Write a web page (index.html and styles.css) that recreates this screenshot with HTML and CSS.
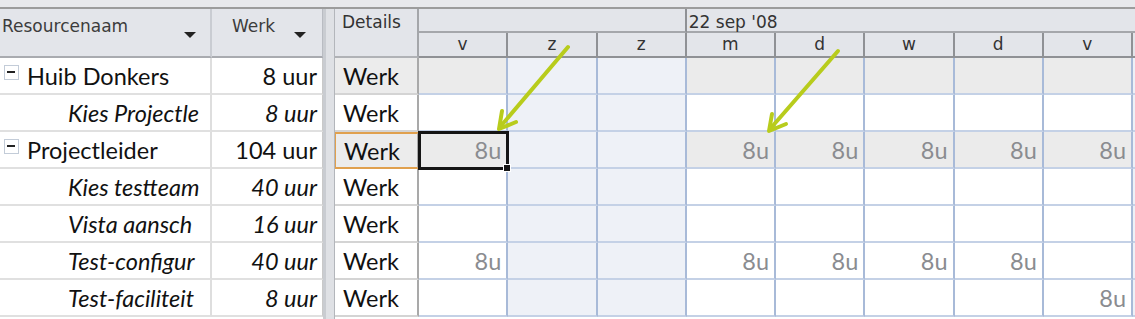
FILE: index.html
```html
<!DOCTYPE html>
<html lang="nl">
<head>
  <meta charset="UTF-8" />
  <title>Resourcegebruik</title>
  <link rel="stylesheet" href="styles.css">
</head>
<body>
  <div class="topstrip"></div>
  <div class="view">
    <div class="sheet">
      <div class="hd">Resourcenaam<span class="drop"></span></div>
      <div class="hd hd-werk">Werk<span class="drop"></span></div>

      <div class="cell name group"><span class="minus"></span>Huib Donkers</div>
      <div class="cell num">8 uur</div>
      <div class="cell name task">Kies Projectle</div>
      <div class="cell num task">8 uur</div>
      <div class="cell name group"><span class="minus"></span>Projectleider</div>
      <div class="cell num">104 uur</div>
      <div class="cell name task">Kies testteam</div>
      <div class="cell num task">40 uur</div>
      <div class="cell name task">Vista aansch</div>
      <div class="cell num task">16 uur</div>
      <div class="cell name task">Test-configur</div>
      <div class="cell num task">40 uur</div>
      <div class="cell name task">Test-faciliteit</div>
      <div class="cell num task">8 uur</div>
    </div>

    <div class="splitter"></div>

    <div class="timeline">
      <div class="th details-hd">Details</div>
      <div class="th week first"></div>
      <div class="th week">22 sep '08</div>
      <div class="th day">v</div>
      <div class="th day">z</div>
      <div class="th day">z</div>
      <div class="th day">m</div>
      <div class="th day">d</div>
      <div class="th day">w</div>
      <div class="th day">d</div>
      <div class="th day">v</div>
      <div class="th day"></div>
    </div>
  </div>

  <svg class="arrows" width="1135" height="319" viewBox="0 0 1135 319">
    <g fill="none" stroke="#b8cc1c" stroke-width="4" stroke-linecap="round" stroke-linejoin="round">
      <line x1="568" y1="47" x2="500" y2="127" />
      <polyline points="502,111 499,129 516,122" />
      <line x1="838" y1="51" x2="770" y2="129" />
      <polyline points="772,114 769,131 786,124" />
    </g>
  </svg>

  <script>
    // timephased rows: one entry per resource / assignment
    const rows = [
      { kind: 'sum', cells: ['', '', '', '', '', '', '', '', ''] },
      { kind: '',    cells: ['', '', '', '', '', '', '', '', ''] },
      { kind: 'sum sel-row', cells: ['8u', '', '', '8u', '8u', '8u', '8u', '8u', ''] },
      { kind: '',    cells: ['', '', '', '', '', '', '', '', ''] },
      { kind: '',    cells: ['', '', '', '', '', '', '', '', ''] },
      { kind: '',    cells: ['8u', '', '', '8u', '8u', '8u', '8u', '', ''] },
      { kind: '',    cells: ['', '', '', '', '', '', '', '8u', ''] }
    ];
    const weekend = [1, 2, 8];
    const grid = document.querySelector('.timeline');

    rows.forEach((row, r) => {
      const d = document.createElement('div');
      d.className = 'det ' + row.kind;
      d.textContent = 'Werk';
      grid.appendChild(d);
      row.cells.forEach((val, c) => {
        const td = document.createElement('div');
        td.className = 'tp ' + row.kind;
        if (weekend.includes(c)) td.classList.add('wknd');
        if (r === 2 && c === 0) td.classList.add('selected');
        td.textContent = val;
        grid.appendChild(td);
      });
    });
  </script>
</body>
</html>
```

FILE: styles.css
```css
* {
  box-sizing: border-box;
}
body {
  margin: 0;
  width: 1135px;
  height: 319px;
  overflow: hidden;
  background: #fff;
  position: relative;
  font-family: Lato, "Open Sans", sans-serif;
}
.topstrip {
  height: 9px;
  background: #e8e9ec;
  border-bottom: 2px solid #9c9c9c;
}
.view {
  display: flex;
  height: 310px;
}

/* left sheet */
.sheet {
  width: 323px;
  display: grid;
  grid-template-columns: 212px 111px;
  grid-template-rows: 49px repeat(7, 37px);
  flex-shrink: 0;
}
.hd {
  background: #e3e5ea;
  border-right: 2px solid #c9ccd2;
  border-bottom: 2px solid #a9abb0;
  font-family: "DejaVu Sans", sans-serif;
  font-size: 17px;
  color: #3c3c3c;
  padding: 7px 0 0 2px;
  position: relative;
}
.hd-werk {
  padding-left: 20px;
  border-right: 1px solid #b9bcc2;
}
.drop {
  position: absolute;
  right: 14px;
  top: 23px;
  border-left: 6px solid transparent;
  border-right: 6px solid transparent;
  border-top: 6px solid #222;
}
.hd-werk .drop {
  right: 16px;
}
.cell {
  border-right: 2px solid #dedede;
  border-bottom: 2px solid #e0e0e0;
  font-size: 23.5px;
  color: #111;
  white-space: nowrap;
  overflow: hidden;
  display: flex;
  align-items: center;
}
.name {
  padding-left: 27px;
}
.name.task {
  padding-left: 68px;
}
.task {
  font-style: italic;
}
.num {
  justify-content: flex-end;
  padding-right: 5px;
  border-right: 1px solid #c9c9c9;
}
.minus {
  position: relative;
  flex-shrink: 0;
  width: 15px;
  height: 15px;
  margin-left: -23px;
  margin-right: 8px;
  margin-top: -6px;
  border: 1px solid #c3ccd8;
}
.minus::after {
  content: "";
  position: absolute;
  left: 2px;
  top: 5px;
  width: 8px;
  height: 2px;
  background: #222;
}

.splitter {
  width: 12px;
  flex-shrink: 0;
  background: #dfe1e5;
  border-left: 3px solid #c9ccd1;
  border-right: 1px solid #b3b6bb;
}

/* timescale grid */
.timeline {
  display: grid;
  grid-template-columns: 84px repeat(9, 89.25px);
  grid-template-rows: 24px 25px repeat(7, 37px);
  overflow: hidden;
}
.th {
  background: #e3e5ea;
  border-right: 2px solid #8f9195;
  border-bottom: 2px solid #8f9195;
  font-family: "DejaVu Sans", sans-serif;
  font-size: 17px;
  color: #333;
}
.details-hd {
  grid-row: span 2;
  border-bottom: 2px solid #b0b2b6;
  border-right: 2px solid #a4a6aa;
  padding: 3px 0 0 7px;
}
.week {
  border-bottom: 2px solid #a5a7ab;
  padding: 3px 0 0 2px;
  grid-column: span 6;
}
.week.first {
  grid-column: span 3;
}
.day {
  text-align: center;
  line-height: 22px;
}
.det {
  border-right: 2px solid #a9a9a9;
  border-bottom: 2px solid #d4d4d4;
  font-size: 23.5px;
  color: #111;
  padding-left: 8px;
  display: flex;
  align-items: center;
}
.det.sum {
  background: #ececec;
}
.det.sel-row {
  border-top: 2px solid #e0a04e;
  border-left: 1px solid #e0a04e;
  border-bottom: 2px solid #e0a04e;
}
.tp {
  border-right: 2px solid #a8bad8;
  border-bottom: 2px solid #c4d1e6;
  font-size: 23.5px;
  color: #8a8c90;
  display: flex;
  align-items: center;
  justify-content: flex-end;
  padding-right: 5px;
}
.tp.sum {
  background: #ebebeb;
}
.tp.wknd {
  background: #eef1f7;
}
.tp.selected {
  position: relative;
  outline: 3px solid #151515;
  outline-offset: -2px;
}
.tp.selected::after {
  content: "";
  position: absolute;
  right: -5px;
  bottom: -5px;
  width: 6px;
  height: 6px;
  background: #151515;
  border: 1px solid #fff;
}

.arrows {
  position: absolute;
  left: 0;
  top: 0;
  pointer-events: none;
}
```
